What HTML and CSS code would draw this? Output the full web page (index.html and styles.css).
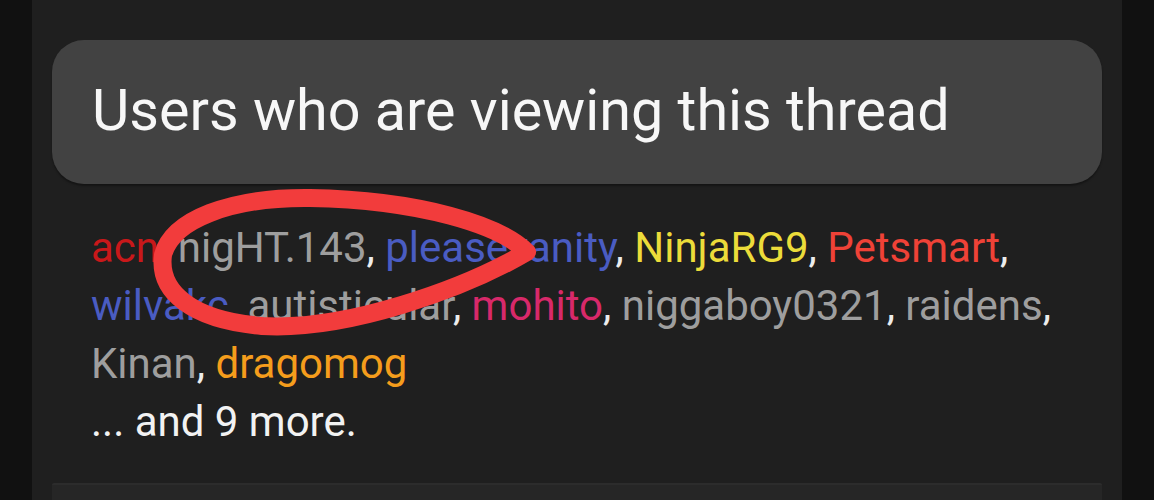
FILE: index.html
```html
<!DOCTYPE html>
<html lang="en">
<head>
<meta charset="utf-8">
<title>Users who are viewing this thread</title>
<link rel="stylesheet" href="styles.css">
</head>
<body>
<div class="page">
  <section class="block">
    <h3 class="block-header">Users who are viewing this thread</h3>
    <div class="block-body">
      <ul class="user-list">
        <li><span class="u red">acn</span>, </li>
        <li><span class="u gray">nigHT.143</span>, </li>
        <li><span class="u blue">pleasevanity</span>, </li>
        <li><span class="u yellow">NinjaRG9</span>, </li>
        <li><span class="u tomato">Petsmart</span>, </li>
        <li><span class="u blue">wilvakc</span>, </li>
        <li><span class="u gray">autisticular</span>, </li>
        <li><span class="u pink">mohito</span>, </li>
        <li><span class="u gray">niggaboy0321</span>, </li>
        <li><span class="u gray">raidens</span>, </li>
        <li><span class="u gray">Kinan</span>, </li>
        <li><span class="u orange">dragomog</span></li>
      </ul>
      <div class="more">... and 9 more.</div>
    </div>
    <svg class="scribble" width="1154" height="500" viewBox="0 0 1154 500" aria-hidden="true">
      <path d="M 527 252 C 500 225, 420 200, 310 198 C 230 197, 172 220, 163 255 C 158 292, 192 320, 262 326 C 345 331, 462 290, 527 252 Z" fill="none" stroke="#f23c3c" stroke-width="18" stroke-linejoin="round" stroke-linecap="round"/>
    </svg>
  </section>
  <div class="next-block"></div>
</div>
</body>
</html>
```
FILE: styles.css
```css
html, body {
  margin: 0;
  padding: 0;
}
body {
  background: #111111;
  font-family: Roboto, "Liberation Sans", sans-serif;
  width: 1154px;
  height: 500px;
  overflow: hidden;
}
.page {
  margin: 0 32px;
  height: 500px;
  background: #1f1f1f;
  padding: 40px 20px 0;
  box-sizing: border-box;
}
.block {
  position: relative;
}
.block-header {
  margin: 0;
  height: 144px;
  box-sizing: border-box;
  background: #424242;
  border-radius: 32px;
  box-shadow: 0 2px 2px rgba(0, 0, 0, 0.35);
  display: flex;
  align-items: center;
  padding: 0 40px 4px;
  color: #f7f7f7;
  font-weight: 400;
  font-size: 57.5px;
}
.block-body {
  padding: 35px 39px 32px;
  font-size: 42px;
  line-height: 58px;
  color: #ececec;
}
.user-list {
  list-style: none;
  margin: 0;
  padding: 0;
  display: flex;
  flex-wrap: wrap;
}
.user-list li {
  white-space: pre;
}
.u.red { color: #c9181a; }
.u.gray { color: #9e9e9e; }
.u.blue { color: #4a5cc2; }
.u.yellow { color: #ecdc3a; }
.u.tomato { color: #ef4237; }
.u.pink { color: #d8296a; }
.u.orange { color: #f59d1c; }
.more {
  color: #f2f2f2;
}
.scribble {
  position: absolute;
  left: -52px;
  top: -40px;
  pointer-events: none;
}
.next-block {
  height: 40px;
  background: #262626;
  border-top: 2px solid #2c2c2c;
  border-radius: 2px;
}
```
